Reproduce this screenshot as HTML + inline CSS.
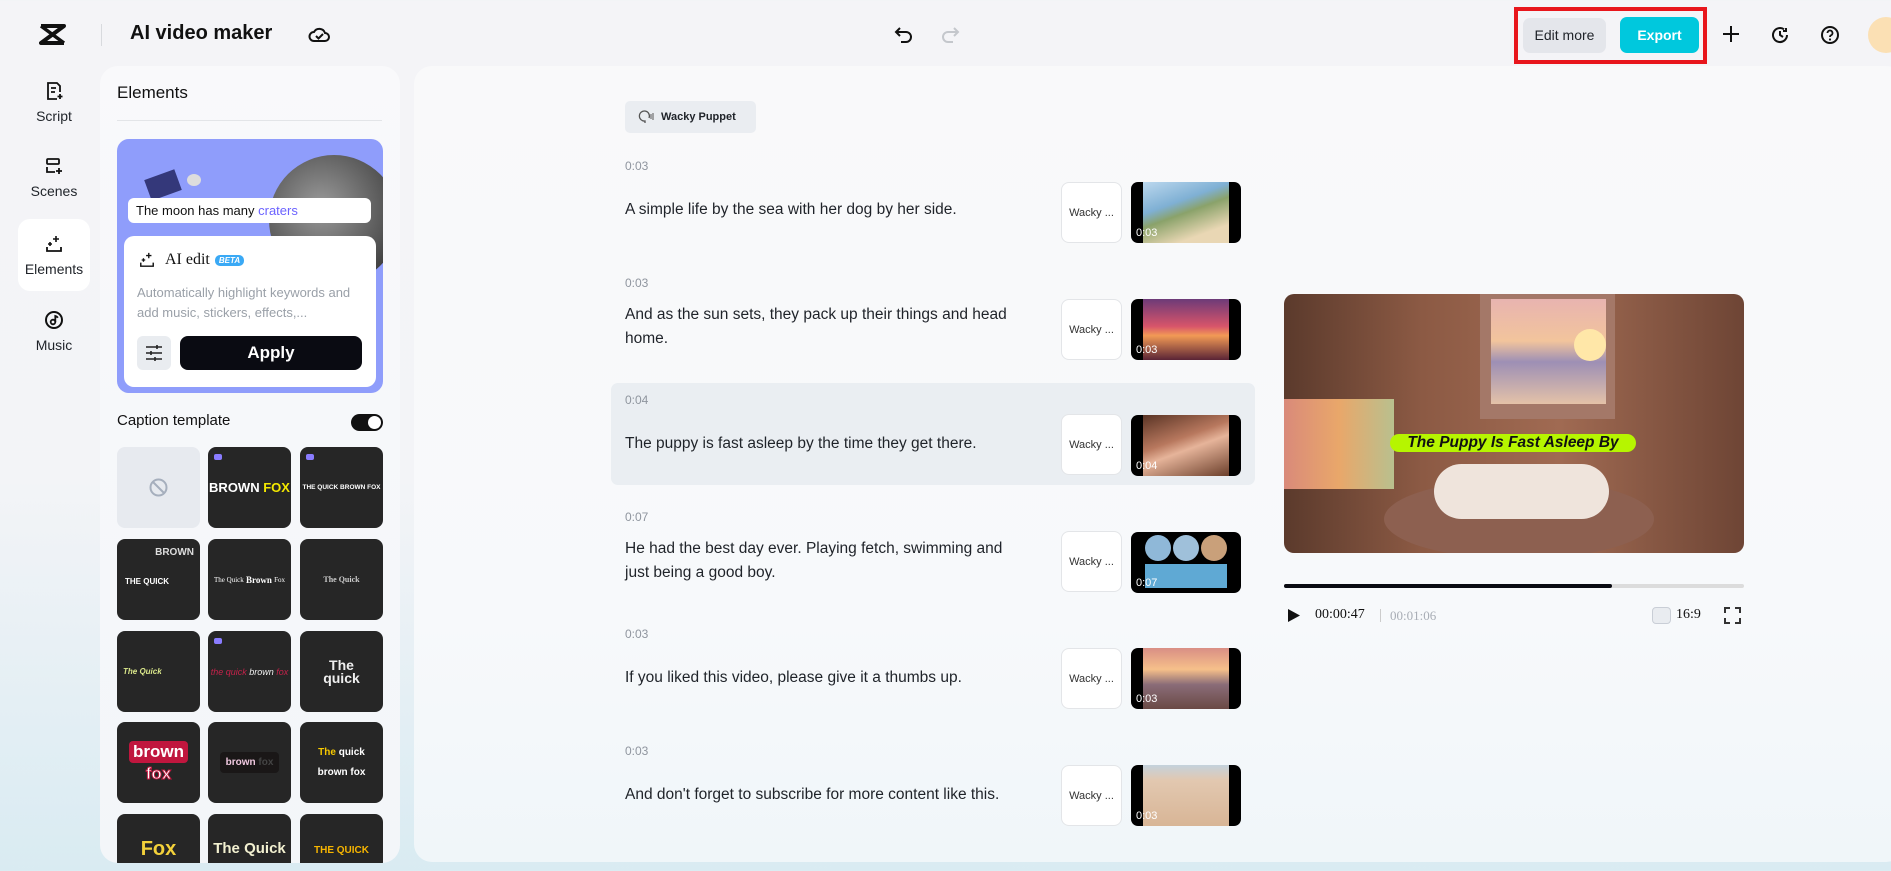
<!DOCTYPE html>
<html><head><meta charset="utf-8"><style>
*{box-sizing:border-box;margin:0;padding:0}
body{width:1891px;height:871px;overflow:hidden;font-family:"Liberation Sans",sans-serif;color:#1f2329;position:relative;background:linear-gradient(180deg,#f4f4f7 0%,#f3f4f7 55%,#d9ebf2 100%)}
.a{position:absolute}
.side{font-size:14px;color:#1f2329;text-align:center;width:72px;left:18px}
.panel{background:#f8f9fb;border-radius:18px}
.tile{position:absolute;width:83px;height:81px;border-radius:8px;background:#262626;color:#fff;display:flex;align-items:center;justify-content:center;text-align:center;overflow:hidden;font-weight:bold}
.gem{position:absolute;left:6px;top:7px;width:8px;height:6px;background:#8a7cff;border-radius:2px}
.ts{position:absolute;left:625px;font-size:12px;color:#8f959e}
.tx{position:absolute;left:625px;font-size:15.5px;color:#1f2329;line-height:24px;width:410px}
.wb{position:absolute;left:1061px;width:61px;height:61px;border:1px solid #e3e5e8;border-radius:8px;background:#fff;font-size:11px;color:#333;display:flex;align-items:center;justify-content:center}
.th{position:absolute;left:1131px;width:110px;height:61px;border-radius:7px;background:#000;overflow:hidden}
.th i{position:absolute;left:12px;right:12px;top:0;bottom:0}
.th b{position:absolute;left:5px;bottom:4px;color:#fff;font-size:11px;font-weight:normal}
</style></head><body>
<!-- header -->
<svg class="a" style="left:39px;top:24px" width="27" height="21" viewBox="0 0 27 21"><path d="M2 2h23L2 19h23" fill="none" stroke="#111" stroke-width="4" stroke-linejoin="round"/><path d="M2 2l23 17M25 2L2 19" stroke="#111" stroke-width="3.5"/></svg>
<div class="a" style="left:101px;top:24px;width:1px;height:22px;background:#d8dade"></div>
<div class="a" style="left:130px;top:22px;font-size:20px;font-weight:bold;color:#111">AI video maker</div>
<svg class="a" style="left:308px;top:24px" width="22" height="20" viewBox="0 0 22 20"><path d="M6 17h11a4 4 0 0 0 0-8 6 6 0 0 0-11-1A4.5 4.5 0 0 0 6 17z" fill="none" stroke="#111" stroke-width="2"/><path d="M8 12l2.5 2.5L15 10" fill="none" stroke="#111" stroke-width="2"/></svg>
<svg class="a" style="left:894px;top:24px" width="20" height="20" viewBox="0 0 20 20"><path d="M6 4L2 8l4 4M2 8h10a5 5 0 0 1 0 10H7" fill="none" stroke="#111" stroke-width="2"/></svg>
<svg class="a" style="left:940px;top:24px" width="20" height="20" viewBox="0 0 20 20"><path d="M14 4l4 4-4 4M18 8H8a5 5 0 0 0 0 10h5" fill="none" stroke="#c4c7cc" stroke-width="2"/></svg>
<div class="a" style="left:1514px;top:7px;width:193px;height:57px;border:4px solid #e8161c"></div>
<div class="a" style="left:1523px;top:18px;width:83px;height:35px;background:#e4e6eb;border-radius:7px;font-size:14px;line-height:35px;text-align:center;color:#1f2329">Edit more</div>
<div class="a" style="left:1620px;top:17px;width:79px;height:36px;background:#00c8dd;border-radius:7px;font-size:14px;font-weight:bold;line-height:36px;text-align:center;color:#fff">Export</div>
<svg class="a" style="left:1722px;top:25px" width="18" height="18"><path d="M9 1v16M1 9h16" stroke="#111" stroke-width="2"/></svg>
<svg class="a" style="left:1770px;top:25px" width="20" height="20" viewBox="0 0 20 20"><path d="M17 10a7 7 0 1 1-3-5.7" fill="none" stroke="#111" stroke-width="2"/><path d="M10 6v4l3 2M16 3v3h-3" fill="none" stroke="#111" stroke-width="2"/></svg>
<svg class="a" style="left:1820px;top:25px" width="20" height="20" viewBox="0 0 20 20"><circle cx="10" cy="10" r="8" fill="none" stroke="#111" stroke-width="2"/><path d="M7.5 8a2.5 2.5 0 1 1 3.5 2.3c-.7.3-1 .8-1 1.7" fill="none" stroke="#111" stroke-width="1.8"/><circle cx="10" cy="14.5" r="1.1" fill="#111"/></svg>
<div class="a" style="left:1868px;top:17px;width:36px;height:36px;border-radius:50%;background:#fbe0b4"></div>
<!-- sidebar -->
<svg class="a" style="left:45px;top:81px" width="18" height="20" viewBox="0 0 18 20"><path d="M12 18H3V2h9l3 3v6" fill="none" stroke="#111" stroke-width="1.8"/><path d="M6 7h5M6 11h4M15 13v5M12.5 15.5h5" stroke="#111" stroke-width="1.8"/></svg>
<div class="a side" style="top:108px">Script</div>
<svg class="a" style="left:45px;top:157px" width="18" height="18" viewBox="0 0 18 18"><rect x="2" y="2" width="12" height="5" rx="1" fill="none" stroke="#111" stroke-width="1.8"/><path d="M2 10v5h8M14 11v6M11 14h6" stroke="#111" stroke-width="1.8" fill="none"/></svg>
<div class="a side" style="top:183px">Scenes</div>
<div class="a" style="left:18px;top:219px;width:72px;height:72px;background:#fff;border-radius:12px"></div>
<svg class="a" style="left:45px;top:235px" width="18" height="18" viewBox="0 0 18 18"><path d="M2 12v4h14v-4" fill="none" stroke="#111" stroke-width="1.8"/><path d="M11 1v6M8 4h6M5 7v4M3 9h4" stroke="#111" stroke-width="1.6"/></svg>
<div class="a side" style="top:261px">Elements</div>
<svg class="a" style="left:44px;top:310px" width="20" height="20" viewBox="0 0 20 20"><circle cx="10" cy="10" r="8" fill="none" stroke="#111" stroke-width="2"/><circle cx="9" cy="12" r="2.3" fill="none" stroke="#111" stroke-width="1.8"/><path d="M11.3 12V6c1 .3 2 .8 2.5 1.8" fill="none" stroke="#111" stroke-width="1.8"/></svg>
<div class="a side" style="top:337px">Music</div>
<!-- left panel -->
<div class="a panel" style="left:100px;top:66px;width:300px;height:797px;background:linear-gradient(180deg,#f9f9fb,#f3f6f9)"></div>
<div class="a" style="left:117px;top:83px;font-size:17px;color:#111">Elements</div>
<div class="a" style="left:117px;top:120px;width:265px;height:1px;background:#e3e5e8"></div>
<div class="a" style="left:117px;top:139px;width:266px;height:254px;background:#8f9dfb;border-radius:12px;overflow:hidden">
 <div class="a" style="left:152px;top:16px;width:130px;height:130px;border-radius:50%;background:radial-gradient(circle at 40% 40%,#9a9a9a,#555 60%,#222)"></div>
 <div class="a" style="left:30px;top:35px;width:32px;height:22px;background:#34387a;transform:rotate(-20deg)"></div>
 <div class="a" style="left:70px;top:35px;width:14px;height:12px;border-radius:50%;background:#ddd"></div>
</div>
<div class="a" style="left:128px;top:198px;width:243px;height:25px;background:#fff;border-radius:6px;font-size:13px;line-height:25px;padding-left:8px;color:#111">The moon has many <span style="color:#6b62ff">craters</span></div>
<div class="a" style="left:124px;top:236px;width:252px;height:151px;background:#fff;border-radius:10px"></div>
<svg class="a" style="left:139px;top:252px" width="16" height="16" viewBox="0 0 18 18"><path d="M2 12v4h14v-4" fill="none" stroke="#111" stroke-width="1.6"/><path d="M11 1v6M8 4h6M5 7v4M3 9h4" stroke="#111" stroke-width="1.5"/></svg>
<div class="a" style="left:165px;top:251px;font-family:'Liberation Serif',serif;font-size:16px;color:#111">AI edit</div>
<div class="a" style="left:215px;top:255px;width:29px;height:11px;background:#3aa9f5;border-radius:5px;color:#fff;font-size:8px;font-style:italic;font-weight:bold;text-align:center;line-height:11px">BETA</div>
<div class="a" style="left:137px;top:283px;font-size:13px;color:#9aa0a8;line-height:20px;width:236px">Automatically highlight keywords and add music, stickers, effects,...</div>
<div class="a" style="left:137px;top:336px;width:34px;height:34px;background:#e9ecf0;border-radius:6px"></div>
<svg class="a" style="left:145px;top:344px" width="18" height="18" viewBox="0 0 18 18"><path d="M1 3h16M1 9h16M1 15h16" stroke="#222" stroke-width="1.6"/><path d="M12 1v4M6 7v4M10 13v4" stroke="#222" stroke-width="1.6"/></svg>
<div class="a" style="left:180px;top:336px;width:182px;height:34px;background:#0a0b12;border-radius:8px;color:#fff;font-size:17px;font-weight:bold;text-align:center;line-height:34px">Apply</div>
<div class="a" style="left:117px;top:412px;font-size:15px;color:#111">Caption template</div>
<div class="a" style="left:351px;top:414px;width:32px;height:17px;border-radius:9px;background:#111"><div class="a" style="right:2px;top:2px;width:13px;height:13px;border-radius:50%;background:#fff"></div></div>
<div class="a" style="left:117px;top:447px;width:83px;height:81px;border-radius:8px;background:#e7eaef"></div>
<svg class="a" style="left:148px;top:477px" width="21" height="21"><circle cx="10.5" cy="10.5" r="8" fill="none" stroke="#a6afbd" stroke-width="2"/><path d="M5 5l11 11" stroke="#a6afbd" stroke-width="2"/></svg>
<div class="tile" style="left:208px;top:447px;font-size:13px"><span class="gem"></span>BROWN&nbsp;<span style="color:#f3e800">FOX</span></div>
<div class="tile" style="left:300px;top:447px;font-size:6.5px"><span class="gem"></span>THE QUICK BROWN FOX</div>
<div class="tile" style="left:117px;top:539px;font-size:8px"><span class="a" style="right:6px;top:8px;font-size:10px;color:#ddd">BROWN</span><span class="a" style="left:8px;top:38px">THE QUICK</span></div>
<div class="tile" style="left:208px;top:539px;font-size:7px;font-family:'Liberation Serif',serif;font-weight:normal">The Quick <b style="font-size:9px">&nbsp;Brown&nbsp;</b> Fox</div>
<div class="tile" style="left:300px;top:539px;font-size:8px;font-family:'Liberation Serif',serif;color:#ccc">The Quick</div>
<div class="tile" style="left:117px;top:631px;font-size:8px;font-style:italic;color:#d9e68a;justify-content:flex-start;padding-left:6px">The Quick</div>
<div class="tile" style="left:208px;top:631px;font-size:9px;font-style:italic;color:#c4224a;font-weight:normal"><span class="gem"></span>the quick <span style="color:#eee">&nbsp;brown&nbsp;</span> fox</div>
<div class="tile" style="left:300px;top:631px;font-size:14px;line-height:13px;color:#eee">The<br>quick</div>
<div class="tile" style="left:117px;top:722px;font-size:17px;line-height:22px;flex-direction:column"><span style="background:#c0163e;border-radius:4px;padding:0 4px">brown</span><span style="color:#fff;-webkit-text-stroke:1px #c0163e">fox</span></div>
<div class="tile" style="left:208px;top:722px;font-size:10px"><span style="background:#1a1717;padding:5px 6px;border-radius:4px;color:#f0c8e0">brown <span style="color:#444">fox</span></span></div>
<div class="tile" style="left:300px;top:722px;font-size:10px;line-height:20px;flex-direction:column"><span><span style="color:#f7c900">The</span> quick</span><span>brown fox</span></div>
<div class="a" style="left:100px;top:814px;width:300px;height:49px;overflow:hidden;border-radius:0 0 18px 18px">
<div class="tile" style="left:17px;top:0;font-size:20px;color:#f3d13a;align-items:flex-start;padding-top:24px">Fox</div>
<div class="tile" style="left:108px;top:0;font-size:15px;color:#f2f0d0;align-items:flex-start;padding-top:26px">The Quick</div>
<div class="tile" style="left:200px;top:0;font-size:10px;color:#f7b500;align-items:flex-start;padding-top:31px">THE QUICK</div>
</div>
<!-- main panel -->
<div class="a panel" style="left:414px;top:66px;width:1490px;height:796px;background:linear-gradient(180deg,#f9f9fa,#f7f9fb 70%,#f0f6f9)"></div>
<div class="a" style="left:625px;top:101px;width:131px;height:32px;background:#eaedf1;border-radius:5px;font-size:11px;line-height:32px;padding-left:36px;color:#1f2329;font-weight:bold">Wacky Puppet</div>
<svg class="a" style="left:636px;top:109px" width="20" height="16" viewBox="0 0 20 16"><path d="M9 14V12a5 5 0 1 1 4-3" fill="none" stroke="#555" stroke-width="1.3"/><path d="M15 5v5M17 4v7" stroke="#555" stroke-width="1"/></svg>
<div class="a" style="left:611px;top:383px;width:644px;height:102px;background:#eaeef2;border-radius:7px"></div>

<div class="ts" style="top:159px">0:03</div>
<div class="tx" style="top:198px">A simple life by the sea with her dog by her side.</div>
<div class="wb" style="top:182px">Wacky ...</div>
<div class="th" style="top:182px"><i style="background:linear-gradient(160deg,#bcd8ee 0%,#7fb0d4 35%,#8aa26a 50%,#e9d7b4 80%)"></i><b>0:03</b></div>

<div class="ts" style="top:276px">0:03</div>
<div class="tx" style="top:303px">And as the sun sets, they pack up their things and head home.</div>
<div class="wb" style="top:299px">Wacky ...</div>
<div class="th" style="top:299px"><i style="background:linear-gradient(180deg,#6c3a78 0%,#d8556a 45%,#f29a55 60%,#5a2436 100%)"></i><b>0:03</b></div>

<div class="ts" style="top:393px">0:04</div>
<div class="tx" style="top:432px">The puppy is fast asleep by the time they get there.</div>
<div class="wb" style="top:414px">Wacky ...</div>
<div class="th" style="top:415px"><i style="background:linear-gradient(160deg,#5a3425 0%,#b8785e 40%,#e6b49a 55%,#6b3f2b 100%)"></i><b>0:04</b></div>

<div class="ts" style="top:510px">0:07</div>
<div class="tx" style="top:537px;width:400px">He had the best day ever. Playing fetch, swimming and just being a good boy.</div>
<div class="wb" style="top:531px">Wacky ...</div>
<div class="th" style="top:532px"><span class="a" style="left:14px;top:3px;width:26px;height:26px;border-radius:50%;background:#8fb8d8"></span><span class="a" style="left:42px;top:3px;width:26px;height:26px;border-radius:50%;background:#9fc0da"></span><span class="a" style="left:70px;top:3px;width:26px;height:26px;border-radius:50%;background:#c9a07a"></span><span class="a" style="left:14px;top:32px;width:82px;height:24px;background:#5fa9d4"></span><b>0:07</b></div>

<div class="ts" style="top:627px">0:03</div>
<div class="tx" style="top:666px">If you liked this video, please give it a thumbs up.</div>
<div class="wb" style="top:648px">Wacky ...</div>
<div class="th" style="top:648px"><i style="background:linear-gradient(180deg,#d98f85 0%,#f6c08a 35%,#8a6c78 60%,#6a4a45 100%)"></i><b>0:03</b></div>

<div class="ts" style="top:744px">0:03</div>
<div class="tx" style="top:783px">And don't forget to subscribe for more content like this.</div>
<div class="wb" style="top:765px">Wacky ...</div>
<div class="th" style="top:765px"><i style="background:linear-gradient(180deg,#c4d2dc 0%,#e2c8b0 25%,#d8b596 100%)"></i><b>0:03</b></div>

<!-- video -->
<div class="a" style="left:1284px;top:294px;width:460px;height:259px;border-radius:10px;overflow:hidden;background:linear-gradient(90deg,#5b3a2c 0%,#8c5a44 30%,#a06a52 60%,#6e4535 100%)">
 <div class="a" style="left:196px;top:0;width:135px;height:125px;background:#a47868"></div>
 <div class="a" style="left:207px;top:5px;width:115px;height:105px;background:linear-gradient(180deg,#e8b4b0 0%,#f2c49c 40%,#9d8fb5 60%,#e4c2a8 100%)"></div>
 <div class="a" style="left:290px;top:35px;width:32px;height:32px;border-radius:50%;background:#ffe7a8"></div>
 <div class="a" style="left:0;top:105px;width:110px;height:90px;background:linear-gradient(90deg,#d98a7a,#e9a76a,#b9c08e)"></div>
 <div class="a" style="left:100px;top:185px;width:270px;height:80px;border-radius:50%;background:#8d6050"></div>
 <div class="a" style="left:150px;top:170px;width:175px;height:55px;border-radius:40px;background:#efe4dc"></div>
 <div class="a" style="left:106px;top:140px;width:246px;height:18px;border-radius:9px;background:#b6f500;font-size:15.5px;font-weight:bold;font-style:italic;color:#111;text-align:center;line-height:18px">The Puppy Is Fast Asleep By</div>
</div>
<div class="a" style="left:1284px;top:584px;width:460px;height:4px;background:#dcdcdc;border-radius:2px"></div>
<div class="a" style="left:1284px;top:584px;width:328px;height:4px;background:#0a0b12;border-radius:2px"></div>
<svg class="a" style="left:1287px;top:608px" width="14" height="15"><path d="M1 1l12 6.5L1 14z" fill="#111"/></svg>
<div class="a" style="left:1315px;top:607px;font-family:'Liberation Serif',serif;font-size:14px;color:#111">00:00:47</div>
<div class="a" style="left:1380px;top:609px;width:1px;height:13px;background:#ccc"></div>
<div class="a" style="left:1390px;top:608px;font-family:'Liberation Serif',serif;font-size:13px;color:#a8adb5">00:01:06</div>
<div class="a" style="left:1652px;top:607px;width:19px;height:17px;border:1px solid #c9ced6;border-radius:4px;background:#e9ecf0"></div>
<div class="a" style="left:1676px;top:607px;font-family:'Liberation Serif',serif;font-size:14px;color:#111">16:9</div>
<svg class="a" style="left:1724px;top:607px" width="17" height="17"><path d="M1 6V1h5M11 1h5v5M16 11v5h-5M6 16H1v-5" fill="none" stroke="#333" stroke-width="2"/></svg>
</body></html>
